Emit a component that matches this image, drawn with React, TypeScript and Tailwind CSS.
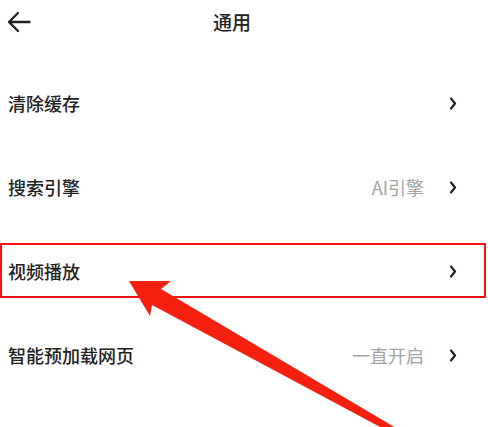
import { ReactNode } from "react";

const rows: { label: string; value?: string; boxed?: boolean }[] = [
  { label: "清除缓存" },
  { label: "搜索引擎", value: "AI引擎" },
  { label: "视频播放", boxed: true },
  { label: "智能预加载网页", value: "一直开启" },
];

function Chevron() {
  return (
    <svg width="8" height="13" viewBox="0 0 8 13" className="shrink-0">
      <polyline
        points="2,1.5 6,6.5 2,11.5"
        fill="none"
        stroke="#222"
        strokeWidth="2.2"
        strokeLinecap="round"
        strokeLinejoin="round"
      />
    </svg>
  );
}

function Row({ label, value, boxed }: { label: string; value?: string; boxed?: boolean }) {
  return (
    <div className="relative h-[84px] flex items-center pl-[8px] pr-[31px]">
      <span className="flex-1 text-[18px] font-medium text-[#222]">{label}</span>
      {value && <span className="mr-[25px] text-[18px] text-[#a3a3a3]">{value}</span>}
      <Chevron />
      {boxed && (
        <div className="absolute left-0 right-[2px] top-[14px] bottom-[15px] border-2 border-[#f51212]" />
      )}
    </div>
  );
}

function Page({ children }: { children: ReactNode }) {
  return (
    <div
      className="relative w-[488px] h-[427px] overflow-hidden bg-white"
      style={{ fontFamily: '"Noto Sans CJK SC", "Noto Sans", sans-serif' }}
    >
      {children}
    </div>
  );
}

export default function App() {
  return (
    <Page>
      <div className="h-[44px] flex items-center pl-[7px]">
        <svg width="24" height="22" viewBox="0 0 24 22">
          <path
            d="M22.5 11 H2.5 M11 2 L2 11 L11 20"
            fill="none"
            stroke="#222"
            strokeWidth="2.4"
            strokeLinecap="round"
            strokeLinejoin="round"
          />
        </svg>
        <span className="ml-[182px] text-[19px] font-medium text-[#222]">通用</span>
      </div>
      <div className="pt-[17px]">
        {rows.map((r) => (
          <Row key={r.label} {...r} />
        ))}
      </div>
      {/* annotation arrow */}
      <svg className="absolute inset-0 pointer-events-none" width="488" height="427" viewBox="0 0 488 427">
        <polygon
          points="129,281 171,281 161,289 396,428 382,428 152,305 150,316"
          fill="#f5200f"
        />
      </svg>
    </Page>
  );
}
